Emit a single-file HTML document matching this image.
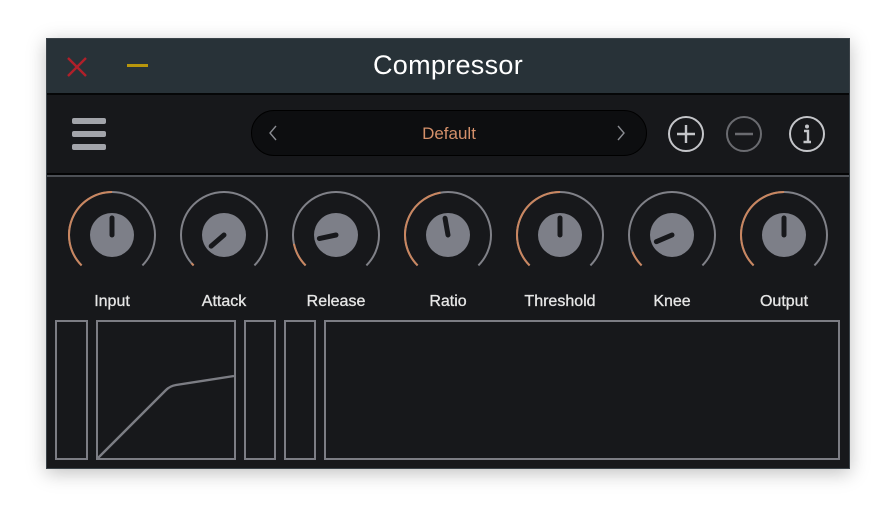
<!DOCTYPE html>
<html><head><style>
body{margin:0;width:896px;height:524px;background:#fff;position:relative;overflow:hidden;font-family:"Liberation Sans","DejaVu Sans",sans-serif}
.win{position:absolute;left:46px;top:38px;width:804px;height:431px;background:#17181b;box-shadow:0 4px 18px rgba(0,0,0,.25);border:1px solid #3a4248;box-sizing:border-box}
.title{position:absolute;left:0;top:0;width:100%;height:54px;background:#283238;border-bottom:2px solid #050607}
.title .t{position:absolute;left:0;right:0;top:11px;text-align:center;color:#fff;font-size:27px;letter-spacing:.3px}
.tool{position:absolute;left:0;top:56px;width:100%;height:78px;background:#17181b;border-bottom:2px solid #030304}
.sep{position:absolute;left:0;top:136px;width:100%;height:2px;background:#4c4f55}
.pill{position:absolute;left:204px;top:15px;width:394px;height:44px;border-radius:23px;background:#0d0e10;border:1px solid #000}
.pill .d{position:absolute;left:0;right:0;top:13px;text-align:center;color:#d4906a;font-size:17px}
.lab{position:absolute;top:254px;width:112px;text-align:center;color:#e6e6e6;font-size:16px;-webkit-text-stroke:0.3px #e6e6e6}
.box{position:absolute;border:2px solid #7c7d84;box-sizing:border-box}
</style></head><body>
<div class="win">
 <div class="title">
  <svg style="position:absolute;left:18px;top:16px" width="24" height="24"><path d="M3 3L21 21M21 3L3 21" stroke="#b0202a" stroke-width="2.4"/></svg>
  <div style="position:absolute;left:80px;top:25px;width:21px;height:3px;background:#b8960c"></div>
  <div class="t">Compressor</div>
 </div>
 <div class="tool">
  <div style="position:absolute;left:25px;top:23px;width:34px;height:6px;border-radius:2px;background:#a2a4aa"></div>
  <div style="position:absolute;left:25px;top:36px;width:34px;height:6px;border-radius:2px;background:#a2a4aa"></div>
  <div style="position:absolute;left:25px;top:49px;width:34px;height:6px;border-radius:2px;background:#a2a4aa"></div>
  <div class="pill"><div class="d">Default</div>
   <svg style="position:absolute;left:16px;top:13px" width="10" height="18"><path d="M8 2L2 9L8 16" stroke="#8a8c92" stroke-width="1.4" fill="none"/></svg>
   <svg style="position:absolute;left:364px;top:13px" width="10" height="18"><path d="M2 2L8 9L2 16" stroke="#8a8c92" stroke-width="1.4" fill="none"/></svg>
  </div>
  <svg style="position:absolute;left:620px;top:20px" width="40" height="40"><circle cx="19" cy="19" r="17" stroke="#c4c5c9" stroke-width="2" fill="none"/><path d="M19 10V28M10 19H28" stroke="#c4c5c9" stroke-width="2.4"/></svg>
  <svg style="position:absolute;left:678px;top:20px" width="40" height="40"><circle cx="19" cy="19" r="17" stroke="#6a6b70" stroke-width="2" fill="none"/><path d="M10 19H28" stroke="#6a6b70" stroke-width="2.4"/></svg>
  <svg style="position:absolute;left:741px;top:20px" width="40" height="40"><circle cx="19" cy="19" r="17" stroke="#c4c5c9" stroke-width="2" fill="none"/><circle cx="19" cy="11.5" r="2" fill="#c4c5c9"/><path d="M16 16H20V27M15.5 27H23" stroke="#c4c5c9" stroke-width="2.4" fill="none"/></svg>
 </div>
 <div class="sep"></div>
 <svg style="position:absolute;left:0;top:140px" width="804" height="110" id="k"></svg>
 <div class="lab" style="left:9px">Input</div>
 <div class="lab" style="left:121px">Attack</div>
 <div class="lab" style="left:233px">Release</div>
 <div class="lab" style="left:345px">Ratio</div>
 <div class="lab" style="left:457px">Threshold</div>
 <div class="lab" style="left:569px">Knee</div>
 <div class="lab" style="left:681px">Output</div>
 <div class="box" style="left:8px;top:281px;width:33px;height:140px"></div>
 <div class="box" style="left:49px;top:281px;width:140px;height:140px"></div>
 <div class="box" style="left:197px;top:281px;width:32px;height:140px"></div>
 <div class="box" style="left:237px;top:281px;width:32px;height:140px"></div>
 <div class="box" style="left:277px;top:281px;width:516px;height:140px"></div>
 <svg style="position:absolute;left:49px;top:281px" width="140" height="140"><path d="M2 138L70 70Q74 66 80 65L138 56" stroke="#7c7d84" stroke-width="2.4" fill="none"/></svg>
</div>
<script>
var s=document.getElementById('k'),h='',cx0=65,cy=56,R=43,vals=[0,-131,-102,-10,0,-113,0];
function pt(a,r,cx){var t=a*Math.PI/180;return [cx+r*Math.sin(t),cy-r*Math.cos(t)];}
function arc(a1,a2,cx,col){var p=pt(a1,R,cx),q=pt(a2,R,cx),l=(a2-a1)>180?1:0;return '<path d="M'+p[0]+' '+p[1]+'A'+R+' '+R+' 0 '+l+' 1 '+q[0]+' '+q[1]+'" stroke="'+col+'" stroke-width="2" fill="none"/>';}
vals.forEach(function(v,i){var cx=cx0+112*i;
h+=arc(-135,135,cx,'#808188');
if(v>-134)h+=arc(-135,v,cx,'#c98660');
h+='<circle cx="'+cx+'" cy="'+cy+'" r="22" fill="#7d7f88"/>';
var e=pt(v,17,cx);h+='<line x1="'+cx+'" y1="'+cy+'" x2="'+e[0]+'" y2="'+e[1]+'" stroke="#17181b" stroke-width="5" stroke-linecap="round"/>';});
s.innerHTML=h;
</script>
</body></html>
